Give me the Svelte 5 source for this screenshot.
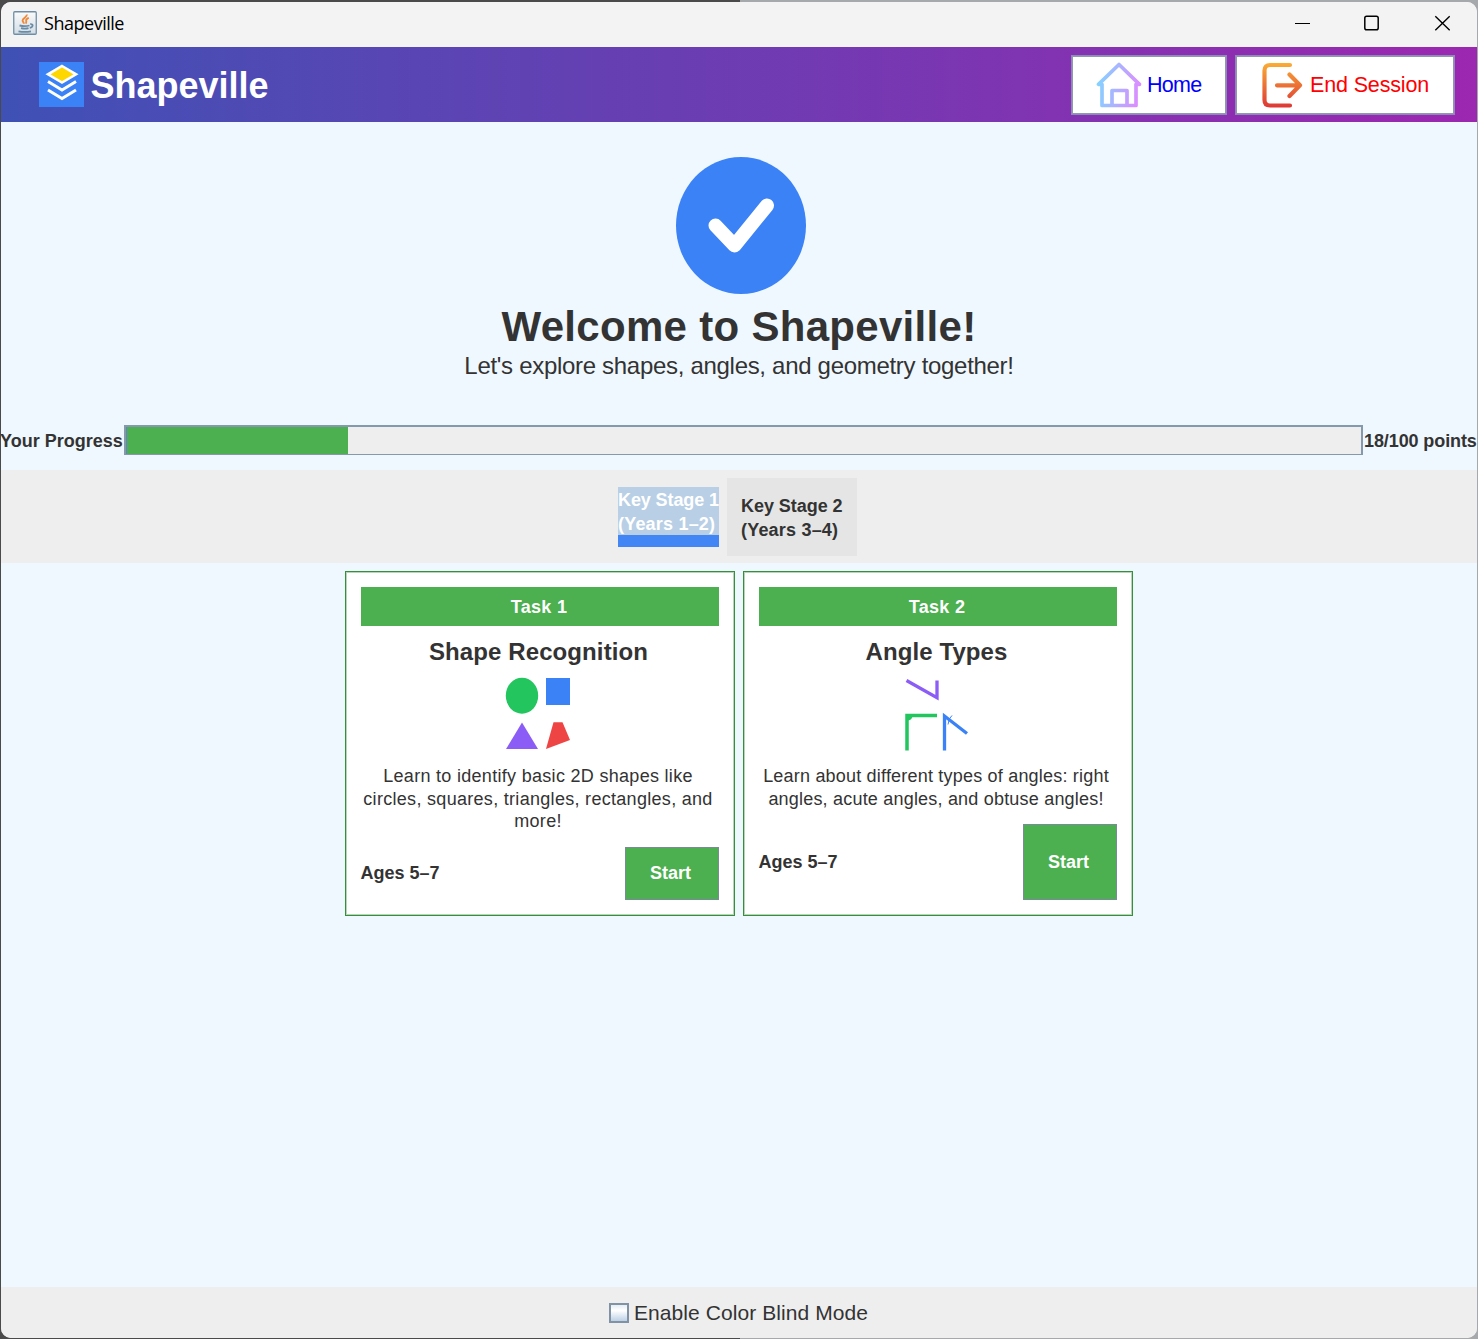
<script>
  const tasks = [
    {
      id: 1,
      title: 'Shape Recognition',
      icon: 'shapes',
      lines: ['Learn to identify basic 2D shapes like', 'circles, squares, triangles, rectangles, and', 'more!'],
      ages: 'Ages 5–7'
    },
    {
      id: 2,
      title: 'Angle Types',
      icon: 'angles',
      lines: ['Learn about different types of angles: right', 'angles, acute angles, and obtuse angles!'],
      ages: 'Ages 5–7'
    }
  ];
  const points = 18;
</script>

<div class="desktop">
  <div class="window">
    <div class="titlebar">
      <svg class="java" width="24" height="24" viewBox="0 0 24 24">
        <defs>
          <linearGradient id="jv" x1="0" y1="0" x2="0" y2="1">
            <stop offset="0" stop-color="#fafafa" />
            <stop offset="1" stop-color="#d3dde5" />
          </linearGradient>
        </defs>
        <rect x="0.75" y="0.75" width="22.5" height="22.5" rx="1" fill="url(#jv)" stroke="#6f8ea6" stroke-width="1.3" />
        <path d="M13.800 3.500c.6 2.600-4.200 3.600-4.200 6 0 1.200 1.300 1.800 1.300 3.200M15.800 6.800c-1.500.8-3 1.500-2.600 2.800.3 1 .5 1.800-.5 3" fill="none" stroke="#ee8a3c" stroke-width="1.900" />
        <path d="M6.500 14.500c3 .7 7.500.7 10 0M8 17.200c2.500.6 5.500.6 7.500 0M5.500 20.300c3.500.7 9 .7 12.500 0M17.200 13.200c3.300-.6 3.300 2.900-.4 3.600" fill="none" stroke="#6a8ba6" stroke-width="1.800" />
      </svg>
      <span class="wintitle">Shapeville</span>
      <svg class="controls" width="156" height="16" viewBox="0 0 156 16">
        <path d="M0 8.500H15" stroke="#000" stroke-width="1" />
        <rect x="69.800" y="1.300" width="13.400" height="13.400" rx="1.800" fill="none" stroke="#000" stroke-width="1.500" />
        <path d="M140.300 1.300L154.700 15.200M154.700 1.300L140.300 15.200" stroke="#000" stroke-width="1.400" />
      </svg>
    </div>

    <header class="header">
      <svg class="logo" width="45" height="45" viewBox="0 0 45 45">
        <rect width="45" height="45" fill="#3b82f6" />
        <path d="M23 4L37 12.300L23 20.500L9 12.300Z" fill="#ffd700" stroke="#fff" stroke-width="2.600" />
        <path d="M9 19.500L23 28L37 19.500M9 28L23 36.500L37 28" fill="none" stroke="#fff" stroke-width="2.900" />
      </svg>
      <h1 class="brand">Shapeville</h1>
      <div class="actions">
        <button class="action home">
          <svg width="46" height="46" viewBox="0 0 46 46">
            <defs>
              <linearGradient id="hg" gradientUnits="userSpaceOnUse" x1="2" y1="20" x2="44" y2="26">
                <stop offset="0" stop-color="#84d2ff" />
                <stop offset="1" stop-color="#dd8cff" />
              </linearGradient>
            </defs>
            <path d="M2.500 22.300H6V43.500H40V22.300H43.500L23 2.500ZM16 43V28.500H31V43" fill="none" stroke="url(#hg)" stroke-width="3.700" stroke-linejoin="round" />
          </svg>
          <span>Home</span>
        </button>
        <button class="action end">
          <svg width="41" height="46" viewBox="0 0 41 46">
            <defs>
              <linearGradient id="eg" gradientUnits="userSpaceOnUse" x1="0" y1="0" x2="0" y2="46">
                <stop offset="0" stop-color="#fbb034" />
                <stop offset="1" stop-color="#dd3535" />
              </linearGradient>
            </defs>
            <path d="M28 3H8Q2.500 3 2.500 8.500V38Q2.500 43.500 8 43.500H28M15 23.300H37M27.500 12.500L38 23.300L27.500 34" fill="none" stroke="url(#eg)" stroke-width="4.200" stroke-linecap="round" stroke-linejoin="round" />
          </svg>
          <span>End Session</span>
        </button>
      </div>
    </header>

    <main class="main">
      <section class="hero">
        <svg class="check" width="130" height="138" viewBox="0 0 130 138">
          <ellipse cx="65" cy="68.500" rx="65" ry="68.500" fill="#3b82f6" />
          <path d="M39.500 68.500L58.500 88.500L91 48.500" fill="none" stroke="#fff" stroke-width="14" stroke-linecap="round" stroke-linejoin="round" />
        </svg>
        <h2>Welcome to Shapeville!</h2>
        <p class="tagline">Let's explore shapes, angles, and geometry together!</p>
      </section>

      <section class="progress">
        <span class="plabel">Your Progress</span>
        <div class="track"><div class="fill" style="width: {points}%"></div></div>
        <span class="ppoints">{points}/100 points</span>
      </section>

      <nav class="tabs">
        <button class="tab active"><span>Key Stage 1</span><span class="years">(Years 1–2)</span></button>
        <button class="tab"><span>Key Stage 2</span><span class="years">(Years 3–4)</span></button>
      </nav>

      <section class="cards">
        {#each tasks as task}
          <article class="card">
            <div class="badge">Task {task.id}</div>
            <h3>{task.title}</h3>
            {#if task.icon === 'shapes'}
              <svg class="pic" width="80" height="90" viewBox="0 0 80 90">
                <ellipse cx="22" cy="25.700" rx="16.200" ry="18" fill="#22c55e" />
                <rect x="46" y="8" width="24" height="27" fill="#3b82f6" />
                <path d="M22 52.500L38 79H6Z" fill="#8b5cf6" />
                <path d="M53.500 52.300H62.500L70 70L46 79Z" fill="#ef4444" />
              </svg>
            {:else}
              <svg class="pic" width="80" height="90" viewBox="0 0 80 90">
                <path d="M8.500 10.500L39 27.700V10.500" fill="none" stroke="#8b5cf6" stroke-width="3.300" />
                <path d="M9 80.500V45.500H39" fill="none" stroke="#22c55e" stroke-width="3.500" />
                <path d="M10 46H14.500Q14 50 10 50.500Z" fill="#22c55e" />
                <path d="M46.500 80.500V46L69 63.500" fill="none" stroke="#3b82f6" stroke-width="3.300" />
                <path d="M50 54.500Q50.500 48 54 45.500" fill="none" stroke="#3b82f6" stroke-width="1" />
              </svg>
            {/if}
            <p class="desc {task.icon}">
              {#each task.lines as line}<span>{line}</span>{/each}
            </p>
            <div class="foot">
              <span class="ages">{task.ages}</span>
              <button class="start">Start</button>
            </div>
          </article>
        {/each}
      </section>
    </main>

    <footer class="footer">
      <label><span class="box"></span><span>Enable Color Blind Mode</span></label>
    </footer>
  </div>
</div>

<style>
  :global(body) {
    background: #4a4a4a;
  }
  * {
    box-sizing: border-box;
  }
  h1, h2, h3, p {
    margin: 0;
  }
  button {
    font: inherit;
    border: 0;
    border-radius: 0;
    padding: 0;
    margin: 0;
    white-space: nowrap;
  }
  .desktop {
    width: 1478px;
    height: 1339px;
    padding: 2px 1px 1px;
    overflow: hidden;
    background: linear-gradient(90deg, #4a4a4a 740px, #a6a9ab 740px);
    font-family: 'Liberation Sans', Arial, sans-serif;
    color: #333;
  }
  .window {
    width: 1476px;
    height: 1336px;
    border-radius: 10px;
    overflow: hidden;
    background: #f0f8ff;
    display: flex;
    flex-direction: column;
  }
  .titlebar {
    height: 45px;
    flex: none;
    background: #f3f3f3;
    display: flex;
    align-items: center;
    padding: 0 26px 3px 12px;
  }
  .wintitle {
    font-family: 'Open Sans', sans-serif;
    font-size: 18px;
    line-height: 24px;
    letter-spacing: -0.48px;
    color: #000;
    margin-left: 7px;
  }
  .controls {
    margin-left: auto;
  }
  .header {
    height: 75px;
    flex: none;
    display: flex;
    align-items: center;
    padding: 0 22px 0 37.500px;
    background: linear-gradient(90deg, #3f51b5, #9c27b0);
  }
  .brand {
    font-size: 36px;
    line-height: 44px;
    color: #fff;
    margin: 3px 0 0 7px;
  }
  .actions {
    margin-left: auto;
    display: flex;
    gap: 8px;
  }
  .action {
    height: 60px;
    background: #fff;
    border: 1px solid #9186bd;
    box-shadow: inset 0 0 0 1px #8d9aa8;
    display: flex;
    align-items: center;
    font-size: 21.500px;
  }
  .action span {
    line-height: 24px;
  }
  .home {
    width: 156px;
    padding-left: 24px;
    gap: 5px;
    color: #00f;
  }
  .home span {
    letter-spacing: -0.75px;
  }
  .end {
    width: 220px;
    padding-left: 26px;
    gap: 7px;
    color: #f00;
  }
  .end span {
    letter-spacing: -0.15px;
  }
  .main {
    flex: 1;
  }
  .hero {
    height: 303px;
    padding-top: 35px;
    display: flex;
    flex-direction: column;
    align-items: center;
  }
  .check {
    margin-left: 4px;
  }
  h2 {
    font-size: 42px;
    line-height: 48px;
    margin-top: 8px;
    letter-spacing: 0.3px;
  }
  .tagline {
    font-size: 24px;
    line-height: 28px;
    letter-spacing: -0.3px;
    margin-top: 1px;
  }
  .progress {
    height: 30px;
    display: flex;
    align-items: center;
    font-weight: bold;
    font-size: 18px;
    margin: 0 -1px;
    white-space: nowrap;
  }
  .plabel {
    width: 124px;
    padding-top: 2px;
  }
  .ppoints {
    width: 115px;
    padding-top: 2px;
    padding-left: 1px;
    letter-spacing: -0.1px;
  }
  .track {
    flex: 1;
    height: 30px;
    border: 2px solid #8599ad;
    border-bottom-width: 1px;
    background: #eee;
  }
  .fill {
    height: 100%;
    background: #4caf50;
    border-left: 1px solid #6382bf;
  }
  .tabs {
    height: 93px;
    margin-top: 15px;
    padding-right: 3px;
    background: #eee;
    display: flex;
    justify-content: center;
    align-items: center;
    gap: 8px;
  }
  .tab {
    display: flex;
    flex-direction: column;
    align-items: flex-start;
    justify-content: center;
    width: 130px;
    height: 78px;
    padding: 2px 0 0 14px;
    background: #e5e5e5;
    color: #333;
    font-size: 18px;
    font-weight: bold;
    line-height: 24px;
    letter-spacing: -0.05px;
  }
  .tab.active {
    width: 101px;
    height: 60px;
    padding: 1px 0 0;
    justify-content: flex-start;
    background: #b8cfe5;
    border-bottom: 12px solid #4285f4;
    color: #fff;
    letter-spacing: -0.1px;
  }
  .tab .years {
    letter-spacing: 0.2px;
  }
  .cards {
    display: flex;
    justify-content: center;
    gap: 8px;
    padding: 8px 1px 0 0;
  }
  .card {
    width: 390px;
    height: 345px;
    background: #fff;
    border: 1px solid #388e3c;
    box-shadow: inset 0 0 0 1px #b5d6b7;
    padding: 15px;
    display: flex;
    flex-direction: column;
  }
  .badge {
    height: 39px;
    background: #4caf50;
    color: #fff;
    font-size: 18px;
    font-weight: bold;
    line-height: 41px;
    letter-spacing: 0.3px;
    text-align: center;
    padding-right: 1px;
  }
  h3 {
    font-size: 24px;
    line-height: 28px;
    text-align: center;
    margin-top: 12px;
    padding-right: 2px;
    letter-spacing: 0.1px;
  }
  .pic {
    align-self: center;
    margin-top: 4px;
  }
  .desc {
    font-size: 18px;
    line-height: 22.500px;
    letter-spacing: 0.3px;
    text-align: center;
    margin: 5px 0 14px -3px;
    white-space: nowrap;
  }
  .desc.angles {
    letter-spacing: 0.2px;
  }
  .desc span {
    display: block;
  }
  .foot {
    flex: 1;
    display: flex;
    justify-content: space-between;
    align-items: center;
    font-weight: bold;
    font-size: 18px;
  }
  .ages {
    padding-top: 1px;
  }
  .start {
    width: 94px;
    height: 100%;
    background: #4caf50;
    border: 1px solid #7a8a99;
    color: #fff;
    padding-right: 2px;
  }
  .footer {
    height: 51px;
    flex: none;
    background: #eee;
    display: flex;
    justify-content: center;
    align-items: center;
    font-size: 21px;
    letter-spacing: 0.08px;
    padding-right: 1px;
  }
  .footer label {
    display: flex;
    align-items: center;
    gap: 5px;
  }
  .box {
    width: 20px;
    height: 20px;
    border: 2px solid #8192a5;
    background: linear-gradient(#e4edf5, #fff 35%, #bcd1e6);
  }
</style>
